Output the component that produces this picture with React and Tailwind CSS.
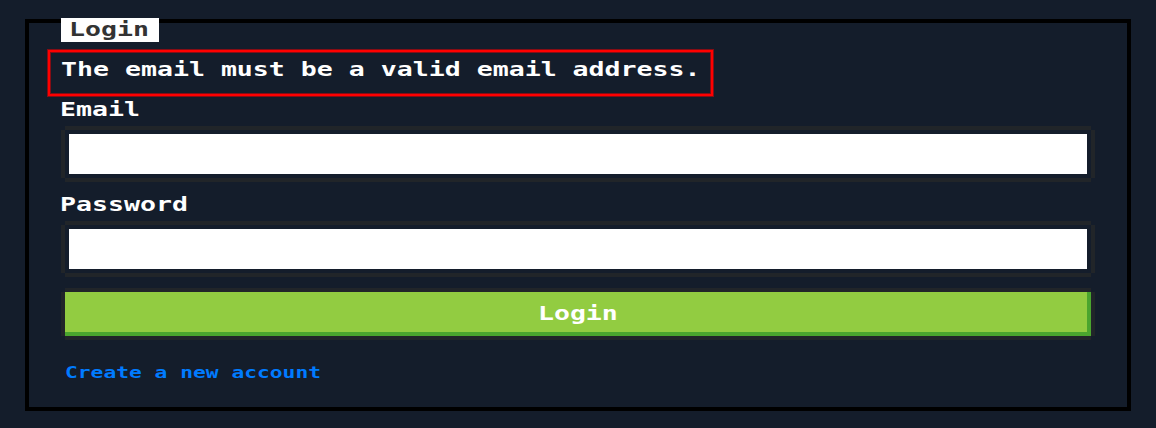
function PixelText({ children, className = "origin-left" }) {
  return (
    <span
      className={`inline-block scale-x-[1.384] whitespace-pre font-['DejaVu_Sans_Mono',monospace] text-[19.2px] leading-6 font-bold ${className}`}
    >
      {children}
    </span>
  );
}

function Field({ id, label, type }) {
  return (
    <div className="flex h-[95px] flex-col">
      <label htmlFor={id} className="h-[33px] pt-px pl-[31px]">
        <PixelText>{label}</PixelText>
      </label>
      <input
        id={id}
        type={type}
        className="mx-9 block h-12 border-4 border-[#141d2b] bg-white shadow-[0_-4px_#212529,0_4px_#212529,-4px_0_#212529,4px_0_#212529] outline-none"
      />
    </div>
  );
}

export default function App() {
  return (
    <main className="h-[428px] overflow-hidden bg-[#141d2b] px-[25px] pt-[19px] text-white">
      <form className="flex h-[392px] w-[1106px] flex-col border-4 border-black">
        <div className="-mt-[5px] ml-8 h-6 w-[98px] shrink-0 bg-white pl-2">
          <PixelText className="-mt-px origin-left text-[#333333]">Login</PixelText>
        </div>
        <div className="relative mt-[15px] h-10 shrink-0 pt-px pl-8">
          <PixelText>The email must be a valid email address.</PixelText>
          <div className="pointer-events-none absolute -top-[7px] left-[19px] h-[46px] w-[665px] border-2 border-[#ff0000] shadow-[0_0_0_1px_#850d15,inset_0_0_0_1px_#850d15]" />
        </div>
        <Field id="email" label="Email" type="text" />
        <Field id="password" label="Password" type="password" />
        <button
          type="button"
          className="mx-9 mt-[5px] flex h-11 shrink-0 justify-center bg-[#92cc41] pt-2.5 shadow-[inset_-4px_-4px_#4aa52e,0_-4px_#212529,0_4px_#212529,-4px_0_#212529,4px_0_#212529]"
        >
          <PixelText className="origin-center">Login</PixelText>
        </button>
        <a href="#register" className="mt-6 ml-9 self-start text-[#007bff]">
          <span className="inline-block origin-left scale-x-[1.4] whitespace-pre font-['DejaVu_Sans_Mono',monospace] text-[15.2px] leading-6 font-bold">
            Create a new account
          </span>
        </a>
      </form>
    </main>
  );
}
